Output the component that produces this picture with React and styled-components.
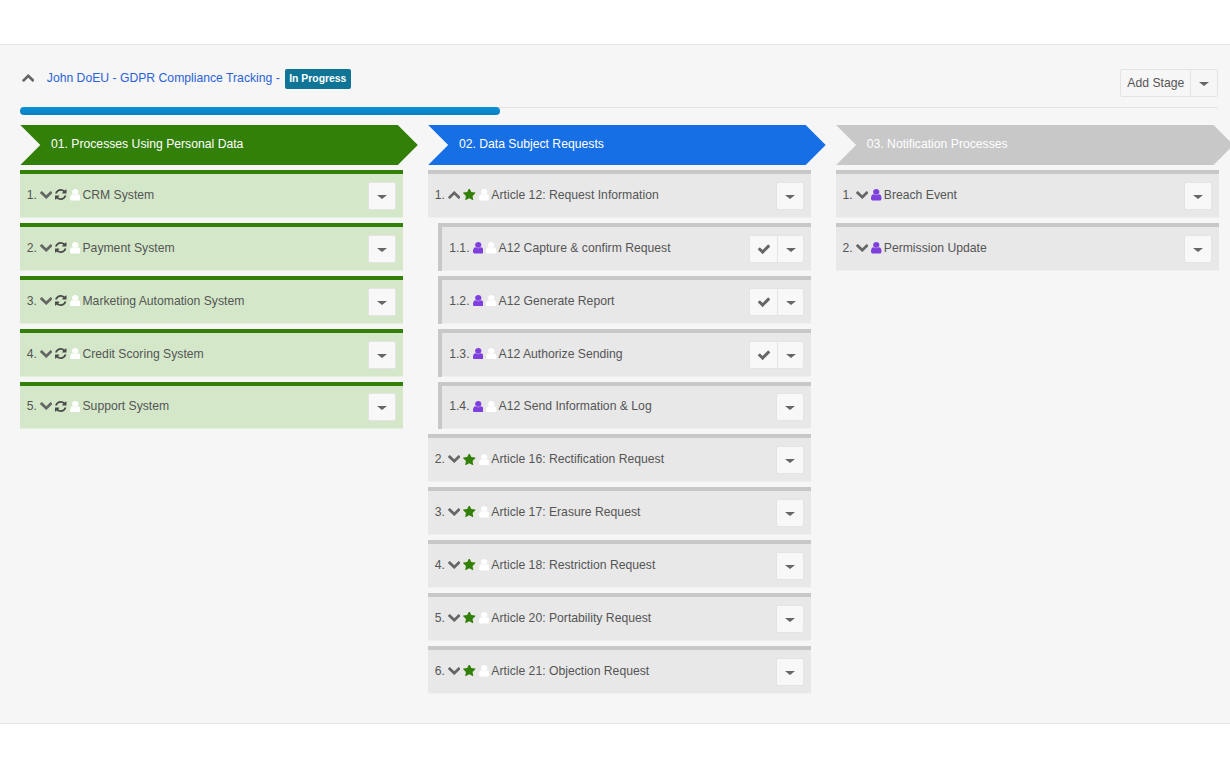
import React from 'react'
import styled, { createGlobalStyle } from 'styled-components'

const GlobalStyle = createGlobalStyle`
  html, body {
    margin: 0;
    padding: 0;
    overflow: hidden;
    background: #fff;
    font-family: "Liberation Sans", Arial, sans-serif;
  }
`

// each glyph has its box cropped to the ink so the row gaps stay even
const glyphs = {
  down: {
    box: '93 520 1606 1048',
    w: 12.5,
    h: 8,
    d: 'M1683 808l-742 741q-19 19-45 19t-45-19l-742-741q-19-19-19-45.5t19-45.5l166-165q19-19 45-19t45 19l531 531 531-531q19-19 45-19t45 19l166 165q19 19 19 45.5t-19 45.5z'
  },
  up: {
    box: '93 467 1606 1048',
    w: 12.5,
    h: 8,
    d: 'M1683 1331l-166 165q-19 19-45 19t-45-19l-531-531-531 531q-19 19-45 19t-45-19l-166-165q-19-19-19-45.5t19-45.5l742-741q19-19 45-19t45 19l742 741q19 19 19 45.5t-19 45.5z'
  },
  refresh: {
    box: '128 128 1536 1536',
    w: 11.5,
    h: 11,
    d: 'M1639 1056q0 5-1 7-64 268-268 434.5t-478 166.5q-146 0-282.5-55t-243.5-157l-129 129q-19 19-45 19t-45-19-19-45v-448q0-26 19-45t45-19h448q26 0 45 19t19 45-19 45l-137 137q71 66 161 102t187 36q134 0 250-65t186-179q11-17 53-117 8-23 30-23h192q13 0 22.5 9.5t9.5 22.5zm25-800v448q0 26-19 45t-45 19h-448q-26 0-45-19t-19-45 19-45l138-138q-148-137-349-137-134 0-250 65t-186 179q-11 17-53 117-8 23-30 23h-199q-13 0-22.5-9.5t-9.5-22.5v-7q65-268 270-434.5t480-166.5q146 0 284 55.5t245 156.5l130-129q19-19 45-19t45 19 19 45z'
  },
  user: {
    box: '256 128 1280 1536',
    w: 10.5,
    h: 11.5,
    d: 'M1536 1399q0 109-62.5 187t-150.5 78h-854q-88 0-150.5-78t-62.5-187q0-85 8.5-160.5t31.5-152 58.5-131 94-89 134.5-34.5q131 128 313 128t313-128q76 0 134.5 34.5t94 89 58.5 131 31.5 152 8.5 160.5zm-256-887q0 159-112.5 271.5t-271.5 112.5-271.5-112.5-112.5-271.5 112.5-271.5 271.5-112.5 271.5 112.5 112.5 271.5z'
  },
  star: {
    box: '64 128 1664 1536',
    w: 12.5,
    h: 11.5,
    d: 'M1728 647q0 22-26 48l-363 354 86 500q1 7 1 20 0 21-10.5 35.5t-30.5 14.5q-19 0-40-12l-449-236-449 236q-22 12-40 12-21 0-31.5-14.5t-10.5-35.5q0-6 2-20l86-500-364-354q-25-27-25-48 0-37 56-46l502-73 225-455q19-41 49-41t49 41l225 455 502 73q56 9 56 46z'
  },
  check: {
    box: '0 0 1792 1792',
    w: 14,
    h: 14,
    d: 'M1671 566q0 40-28 68l-724 724-136 136q-28 28-68 28t-68-28l-136-136-362-362q-28-28-28-68t28-68l136-136q28-28 68-28t68 28l294 295 656-657q28-28 68-28t68 28l136 136q28 28 28 68z'
  }
}

const Svg = styled.svg`
  display: block;
  flex: none;
  fill: ${(p) => p.$color || '#666'};
`

function Icon ({ name, color }) {
  const g = glyphs[name]
  return (
    <Svg viewBox={g.box} width={g.w} height={g.h} preserveAspectRatio='none' $color={color}>
      <path d={g.d} />
    </Svg>
  )
}

const Page = styled.div`
  width: 1230px;
  height: 768px;
  overflow: hidden;
  background: #fff;
`
const TopBar = styled.div`
  height: 44px;
  border-bottom: 1px solid #e2e2e2;
`
const Main = styled.main`
  box-sizing: border-box;
  height: 679px;
  padding: 24px 11.7px 0 20.3px;
  background: #f6f6f6;
  border-bottom: 1px solid #e2e2e2;
`
const TitleRow = styled.div`
  display: flex;
  justify-content: space-between;
  height: 28px;
`
const TitleLeft = styled.div`
  display: flex;
  align-items: flex-start;
`
const Collapse = styled.span`
  margin: 5px 12.5px 0 1.5px;
`
const TitleLink = styled.a`
  margin-right: 5px;
  font-size: 12.2px;
  line-height: 18px;
  color: #2a62d9;
`
const Badge = styled.span`
  box-sizing: border-box;
  width: 66px;
  height: 20px;
  font-size: 10.4px;
  font-weight: 700;
  line-height: 20px;
  text-align: center;
  color: #fff;
  background: #0e7597;
  border-radius: 2px;
`
const ButtonGroup = styled.div`
  display: flex;
  flex: none;
  height: 28px;
  background: ${(p) => p.$bg || 'transparent'};
  border: 1px solid #e4e4e4;
  border-radius: 2px;
  box-sizing: border-box;
`
const GroupButton = styled.div`
  display: flex;
  align-items: center;
  justify-content: center;
  box-sizing: border-box;
  width: ${(p) => p.$width}px;
  font-size: 12.2px;
  color: #555;
  & + & {
    border-left: 1px solid #e4e4e4;
  }
`
const Caret = styled.i`
  display: block;
  width: 0;
  height: 0;
  margin-top: 2px;
  border-left: 5px solid transparent;
  border-right: 5px solid transparent;
  border-top: 4.5px solid #666;
`
const ProgressTrack = styled.div`
  height: 8px;
  margin-top: 10px;
  border-top: 1px solid #e2e2e2;
  box-sizing: border-box;
  border-radius: 4px;
`
const ProgressBar = styled.div`
  height: 8px;
  margin-top: -1px;
  background: linear-gradient(#0b90d6, #0a80c2);
  border-radius: 4px;
`
const Columns = styled.div`
  display: grid;
  grid-template-columns: repeat(3, 382.5px);
  column-gap: 25.4px;
  margin-top: 10px;
`
const Column = styled.section`
  min-width: 0;
`
const StageArrow = styled.div`
  box-sizing: border-box;
  width: calc(100% + 15px);
  height: 40px;
  margin-bottom: 5px;
  padding-left: 30.7px;
  font-size: 12.2px;
  line-height: 38px;
  color: #fff;
  background: ${(p) => p.$color};
  clip-path: polygon(0 0, calc(100% - 20px) 0, 100% 50%, calc(100% - 20px) 100%, 0 100%, 20px 50%);
`
const Row = styled.div`
  box-sizing: border-box;
  display: flex;
  align-items: center;
  justify-content: space-between;
  height: 47.875px;
  margin-bottom: 5px;
  margin-left: ${(p) => (p.$nested ? '10px' : '0')};
  padding: 0 6.5px 0 ${(p) => (p.$nested ? '7px' : '6.5px')};
  background: ${(p) => p.$bg};
  border-top: 4px solid ${(p) => p.$edge};
  border-left: ${(p) => (p.$nested ? `4px solid ${p.$edge}` : '0')};
  box-shadow: inset 0 -1px 0 rgba(255, 255, 255, 0.35);
`
const RowLabel = styled.div`
  display: flex;
  align-items: center;
  gap: 3px;
  margin-top: -2px;
  font-size: 12.2px;
  color: #555;
`
const RowText = styled.span`
  margin-left: -1px;
`

const grey = { bg: '#e8e8e8', edge: '#c8c8c8' }
const green = { bg: '#d4e8c9', edge: '#338008' }

const PURPLE = '#7f3fdd'
const GREEN = '#338008'

const stages = [
  {
    title: '01. Processes Using Personal Data',
    color: '#338008',
    rows: ['CRM System', 'Payment System', 'Marketing Automation System', 'Credit Scoring System', 'Support System'].map((text, i) => ({
      n: `${i + 1}.`,
      text,
      theme: green,
      icons: [['down'], ['refresh', '#4a4a4a'], ['user', '#fff']]
    }))
  },
  {
    title: '02. Data Subject Requests',
    color: '#176fe6',
    rows: [
      { n: '1.', text: 'Article 12: Request Information', icons: [['up'], ['star', GREEN], ['user', '#fff']] },
      { n: '1.1.', text: 'A12 Capture & confirm Request', nested: true, check: true },
      { n: '1.2.', text: 'A12 Generate Report', nested: true, check: true },
      { n: '1.3.', text: 'A12 Authorize Sending', nested: true, check: true },
      { n: '1.4.', text: 'A12 Send Information & Log', nested: true },
      { n: '2.', text: 'Article 16: Rectification Request' },
      { n: '3.', text: 'Article 17: Erasure Request' },
      { n: '4.', text: 'Article 18: Restriction Request' },
      { n: '5.', text: 'Article 20: Portability Request' },
      { n: '6.', text: 'Article 21: Objection Request' }
    ].map((r) => ({
      theme: grey,
      icons: r.nested ? [['user', PURPLE], ['user', '#fff']] : [['down'], ['star', GREEN], ['user', '#fff']],
      ...r
    }))
  },
  {
    title: '03. Notification Processes',
    color: '#c8c8c8',
    rows: ['Breach Event', 'Permission Update'].map((text, i) => ({
      n: `${i + 1}.`,
      text,
      theme: grey,
      icons: [['down'], ['user', PURPLE]]
    }))
  }
]

function TaskRow ({ row }) {
  return (
    <Row $bg={row.theme.bg} $edge={row.theme.edge} $nested={row.nested}>
      <RowLabel>
        <span>{row.n}</span>
        {row.icons.map(([name, color], i) => <Icon key={i} name={name} color={color} />)}
        <RowText>{row.text}</RowText>
      </RowLabel>
      <ButtonGroup $bg='#f8f8f8'>
        {row.check && <GroupButton $width={27}><Icon name='check' /></GroupButton>}
        <GroupButton $width={26}><Caret /></GroupButton>
      </ButtonGroup>
    </Row>
  )
}

export default function App () {
  return (
    <Page>
      <GlobalStyle />
      <TopBar />
      <Main>
        <TitleRow>
          <TitleLeft>
            <Collapse><Icon name='up' /></Collapse>
            <TitleLink>John DoEU - GDPR Compliance Tracking -</TitleLink>
            <Badge>In Progress</Badge>
          </TitleLeft>
          <ButtonGroup>
            <GroupButton $width={69}>Add Stage</GroupButton>
            <GroupButton $width={27}><Caret /></GroupButton>
          </ButtonGroup>
        </TitleRow>
        <ProgressTrack>
          <ProgressBar style={{ width: `${(480 / 1198) * 100}%` }} />
        </ProgressTrack>
        <Columns>
          {stages.map((stage) => (
            <Column key={stage.title}>
              <StageArrow $color={stage.color}>{stage.title}</StageArrow>
              {stage.rows.map((row) => <TaskRow key={row.n} row={row} />)}
            </Column>
          ))}
        </Columns>
      </Main>
    </Page>
  )
}
